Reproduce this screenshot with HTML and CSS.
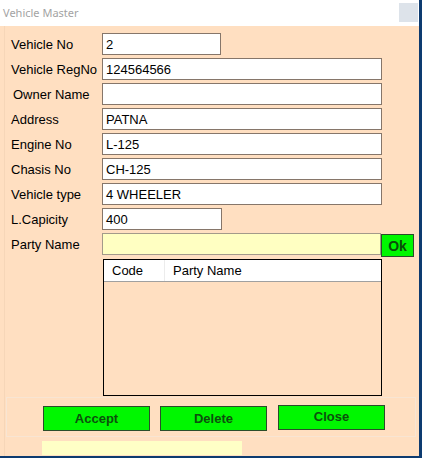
FILE: index.html
```html
<!DOCTYPE html>
<html>
<head>
<meta charset="utf-8">
<link rel="stylesheet" href="styles.css">
</head>
<body>
<div class="window">
  <div class="titlebar">
    <span class="title">Vehicle Master</span>
    <span class="close-btn"></span>
  </div>
  <div class="content">
    <div class="form">
      <label class="lbl">Vehicle No</label>
      <div class="field"><span class="input w-short">2</span></div>
      <label class="lbl">Vehicle RegNo</label>
      <div class="field"><span class="input w-long">124564566</span></div>
      <label class="lbl lbl-indent">Owner Name</label>
      <div class="field"><span class="input w-long"></span></div>
      <label class="lbl">Address</label>
      <div class="field"><span class="input w-long">PATNA</span></div>
      <label class="lbl">Engine No</label>
      <div class="field"><span class="input w-long">L-125</span></div>
      <label class="lbl">Chasis No</label>
      <div class="field"><span class="input w-long">CH-125</span></div>
      <label class="lbl">Vehicle type</label>
      <div class="field"><span class="input w-long">4 WHEELER</span></div>
      <label class="lbl">L.Capicity</label>
      <div class="field"><span class="input w-short2">400</span></div>
      <label class="lbl">Party Name</label>
      <div class="field party">
        <span class="input w-party yellow"></span>
        <span class="ok-btn">Ok</span>
      </div>
    </div>
    <div class="listbox">
      <div class="list-head">
        <span class="col col-code">Code</span>
        <span class="col col-name">Party Name</span>
      </div>
    </div>
    <div class="btn-panel">
      <span class="btn">Accept</span>
      <span class="btn">Delete</span>
      <span class="btn btn-up">Close</span>
    </div>
    <div class="status"></div>
  </div>
</div>
</body>
</html>
```
FILE: styles.css
```css
html, body {
  margin: 0;
  padding: 0;
}
body {
  width: 422px;
  height: 458px;
  background: #0d3b70;
  overflow: hidden;
  font-family: "Liberation Sans", Arial, sans-serif;
}
.window {
  width: 419px;
  height: 456px;
  background: #ffdfc1;
  display: flex;
  flex-direction: column;
}
.titlebar {
  height: 26px;
  background: #ffffff;
  display: flex;
  align-items: center;
  justify-content: space-between;
  padding: 0 1px 0 3px;
  box-sizing: border-box;
}
.title {
  font-family: "Noto Sans", "Open Sans", sans-serif;
  font-size: 11px;
  color: #a3a3a3;
  margin-top: -2px;
}
.close-btn {
  width: 19px;
  height: 19px;
  background: #dde3ea;
  margin-top: -2px;
}
.content {
  flex: 1;
  display: flex;
  flex-direction: column;
  border-left: 1px solid #f6d6b8;
  margin-left: 4px;
  margin-right: 3px;
}
.form {
  display: grid;
  grid-template-columns: 91px auto;
  grid-auto-rows: 22px;
  row-gap: 3px;
  padding: 7px 0 0 6px;
  font-size: 13px;
  color: #000;
}
.lbl {
  display: flex;
  align-items: center;
  height: 22px;
}
.lbl-indent {
  padding-left: 2px;
}
.field {
  display: flex;
  align-items: flex-start;
}
.input {
  box-sizing: border-box;
  height: 22px;
  border: 1px solid #86766a;
  background: #ffffff;
  padding: 2px 0 0 3px;
  font-size: 13px;
  line-height: 17px;
}
.w-short { width: 119px; }
.w-short2 { width: 120px; }
.w-long { width: 280px; }
.w-party { width: 279px; }
.yellow {
  background: #ffffc2;
  border-color: #a39a8a;
}
.ok-btn {
  box-sizing: border-box;
  width: 33px;
  height: 23px;
  margin-top: 1px;
  background: #00f700;
  border: 1px solid #2a4d2a;
  font-weight: bold;
  font-size: 14px;
  color: #0a4d0a;
  display: flex;
  align-items: center;
  justify-content: center;
}
.listbox {
  box-sizing: border-box;
  margin-left: 98px;
  margin-top: 4px;
  width: 279px;
  height: 137px;
  border: 1px solid #000;
  background: #ffdfc1;
}
.list-head {
  display: flex;
  height: 21px;
  background: #fff;
  border-bottom: 1px solid #a0a0a0;
  font-size: 13px;
}
.col {
  display: flex;
  align-items: center;
  padding-left: 8px;
  box-sizing: border-box;
}
.col-code {
  width: 61px;
  border-right: 1px solid #ececec;
}
.col-name {
  flex: 1;
}
.btn-panel {
  box-sizing: border-box;
  height: 40px;
  margin-top: 1px;
  margin-left: 1px;
  width: 410px;
  border: 1px solid #f8e5d3;
  display: flex;
  align-items: flex-start;
  padding: 8px 0 0 36px;
  gap: 10px;
}
.btn {
  box-sizing: border-box;
  width: 107px;
  height: 25px;
  background: #00f700;
  border: 1px solid #2a4d2a;
  font-weight: bold;
  font-size: 13px;
  color: #0d4f0d;
  display: flex;
  align-items: center;
  justify-content: center;
}
.btn-up {
  margin-top: -1px;
  margin-left: 1px;
  padding-bottom: 3px;
}
.status {
  margin-top: 4px;
  margin-left: 37px;
  width: 200px;
  height: 14px;
  background: #ffffc6;
}
```
